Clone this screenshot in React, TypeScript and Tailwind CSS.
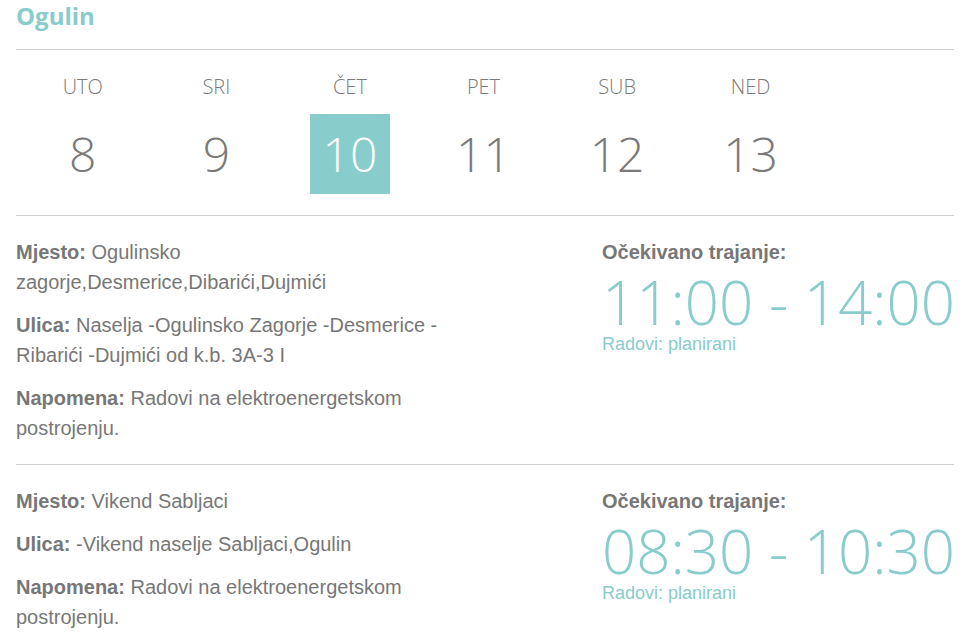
import React from 'react';

interface Day {
  label: string;
  num: number;
  active?: boolean;
}

interface Outage {
  mjesto: string;
  ulica: string;
  napomena: string;
  vrijeme: string;
  status: string;
}

const days: Day[] = [
  { label: 'UTO', num: 8 },
  { label: 'SRI', num: 9 },
  { label: 'ČET', num: 10, active: true },
  { label: 'PET', num: 11 },
  { label: 'SUB', num: 12 },
  { label: 'NED', num: 13 },
];

const outages: Outage[] = [
  {
    mjesto: 'Ogulinsko zagorje,Desmerice,Dibarići,Dujmići',
    ulica: 'Naselja -Ogulinsko Zagorje -Desmerice -Ribarići -Dujmići od k.b. 3A-3 I',
    napomena: 'Radovi na elektroenergetskom postrojenju.',
    vrijeme: '11:00 - 14:00',
    status: 'Radovi: planirani',
  },
  {
    mjesto: 'Vikend Sabljaci',
    ulica: '-Vikend naselje Sabljaci,Ogulin',
    napomena: 'Radovi na elektroenergetskom postrojenju.',
    vrijeme: '08:30 - 10:30',
    status: 'Radovi: planirani',
  },
];

const openSans = "font-['Open_Sans',sans-serif]";
const arial = "font-['Liberation_Sans',sans-serif]";

const DayPicker: React.FC = () => (
  <div className="grid grid-cols-7 w-[935px] pt-[23px] pb-[21px]">
    {days.map((d) => (
      <div key={d.label} className={`flex flex-col items-center ${openSans} font-light`}>
        <div className="text-[20px] leading-[28px] text-[#7a7a7a]">{d.label}</div>
        <div
          className={`mt-[13px] w-[80px] h-[80px] flex items-center justify-center text-[48px] leading-[80px] ${
            d.active ? 'bg-[#88cccc] text-white' : 'text-[#7a7a7a]'
          }`}
        >
          {d.num}
        </div>
      </div>
    ))}
  </div>
);

const OutageRow: React.FC<{ o: Outage }> = ({ o }) => (
  <div className={`flex py-[21px] border-t border-[#d0d0d0] ${arial}`}>
    <div className="w-[586px] shrink-0 pr-[120px] flex flex-col gap-[13px] text-[20px] leading-[30px] text-[#777]">
      <p>
        <b>Mjesto:</b> {o.mjesto}
      </p>
      <p>
        <b>Ulica:</b> {o.ulica}
      </p>
      <p>
        <b>Napomena:</b> {o.napomena}
      </p>
    </div>
    <div className="flex flex-col flex-1 whitespace-nowrap">
      <div className="text-[20px] leading-[30px] font-bold text-[#777]">Očekivano trajanje:</div>
      <div className={`mt-[5px] text-[60px] leading-[60px] font-light text-[#88cccc] ${openSans}`}>
        {o.vrijeme}
      </div>
      <div className="mt-[2px] text-[18px] leading-[20px] text-[#88cccc]">{o.status}</div>
    </div>
  </div>
);

export default function App() {
  return (
    <div className="bg-white min-h-screen pl-4 pr-5">
      <h2 className={`text-[24px] leading-[32px] font-bold text-[#88cccc] ${openSans}`}>Ogulin</h2>
      <div className="mt-[17px] border-t border-[#d0d0d0]">
        <DayPicker />
      </div>
      {outages.map((o, i) => (
        <OutageRow key={i} o={o} />
      ))}
    </div>
  );
}
